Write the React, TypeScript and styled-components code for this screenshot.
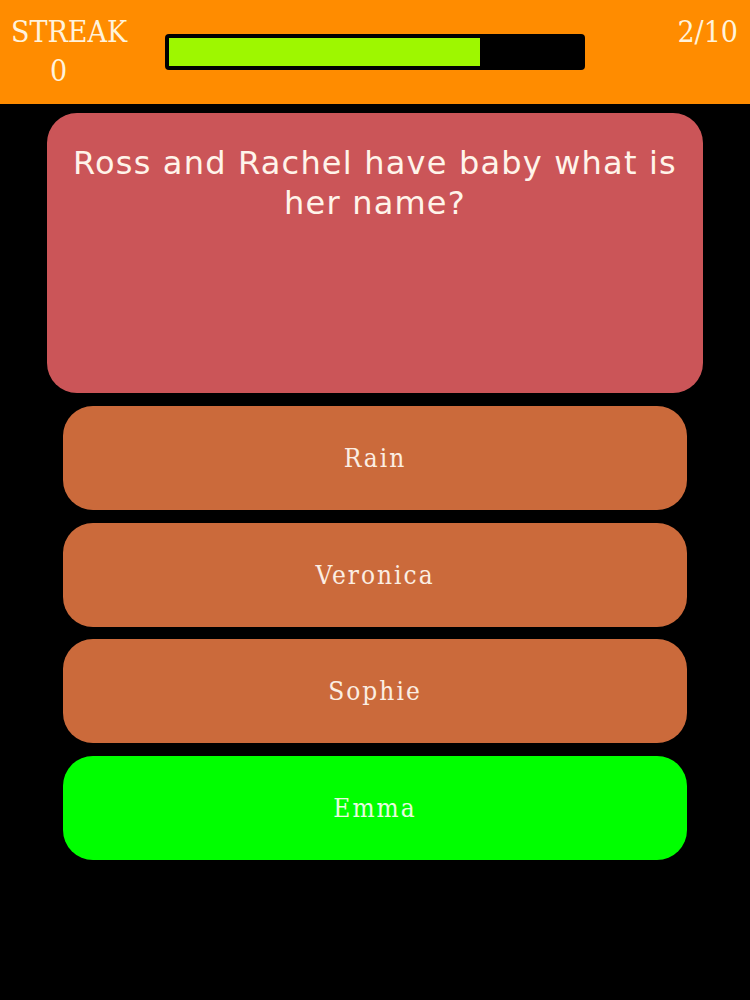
import React from "react";
import styled, { createGlobalStyle } from "styled-components";

const Global = createGlobalStyle`
  html, body { margin: 0; padding: 0; background: #000; }
  body { width: 750px; height: 1000px; overflow: hidden; }
`;

const Page = styled.div`
  width: 750px;
  height: 1000px;
  background: #000;
  display: flex;
  flex-direction: column;
`;

const Header = styled.header`
  height: 104px;
  background: #ff8c00;
  display: flex;
  align-items: flex-start;
  padding: 12px 12px 0 11px;
  box-sizing: border-box;
  font-family: "DejaVu Serif", "Liberation Serif", serif;
  font-stretch: condensed;
  color: #fff3dc;
`;

const Streak = styled.div`
  display: flex;
  flex-direction: column;
  align-items: flex-start;
  font-size: 30px;
  line-height: 39px;
  width: 116px;
`;

const StreakValue = styled.span`
  padding-left: 39px;
`;

const BarTrack = styled.div`
  margin: 22px 0 0 38px;
  width: 420px;
  height: 36px;
  background: #000;
  border-radius: 4px;
  padding: 4px;
  box-sizing: border-box;
`;

const BarFill = styled.div`
  height: 100%;
  background: #9ef700;
`;

const Counter = styled.div`
  margin-left: auto;
  font-size: 30px;
  line-height: 39px;
`;

const Body = styled.main`
  display: flex;
  flex-direction: column;
  align-items: center;
  padding-top: 9px;
  gap: 13px;
`;

const QuestionCard = styled.div`
  width: 656px;
  height: 280px;
  background: #cb5558;
  border-radius: 30px;
  box-sizing: border-box;
  padding: 30px 16px 0;
  text-align: center;
  font-family: "DejaVu Sans", "Liberation Sans", sans-serif;
  font-size: 32px;
  line-height: 40px;
  letter-spacing: 1.2px;
  color: #fff4ea;
`;

const Answers = styled.div`
  display: flex;
  flex-direction: column;
  gap: 12.5px;
`;

const Answer = styled.button<{ $correct?: boolean }>`
  width: 624px;
  height: 104px;
  border: none;
  border-radius: 30px;
  background: ${(p) => (p.$correct ? "#00ff00" : "#cb6a3b")};
  color: ${(p) => (p.$correct ? "#e9fbe0" : "#fbeee3")};
  font-family: "DejaVu Serif", "Liberation Serif", serif;
  font-stretch: condensed;
  font-size: 26px;
  letter-spacing: 2px;
  padding: 0;
  display: flex;
  align-items: center;
  justify-content: center;
`;

const answers = [
  { text: "Rain" },
  { text: "Veronica" },
  { text: "Sophie" },
  { text: "Emma", correct: true },
];

export default function App() {
  const progress = 75.5;
  return (
    <Page>
      <Global />
      <Header>
        <Streak>
          <span>STREAK</span>
          <StreakValue>0</StreakValue>
        </Streak>
        <BarTrack>
          <BarFill style={{ width: `${progress}%` }} />
        </BarTrack>
        <Counter>2/10</Counter>
      </Header>
      <Body>
        <QuestionCard>Ross and Rachel have baby what is her name?</QuestionCard>
        <Answers>
          {answers.map((a) => (
            <Answer key={a.text} $correct={a.correct}>
              {a.text}
            </Answer>
          ))}
        </Answers>
      </Body>
    </Page>
  );
}
